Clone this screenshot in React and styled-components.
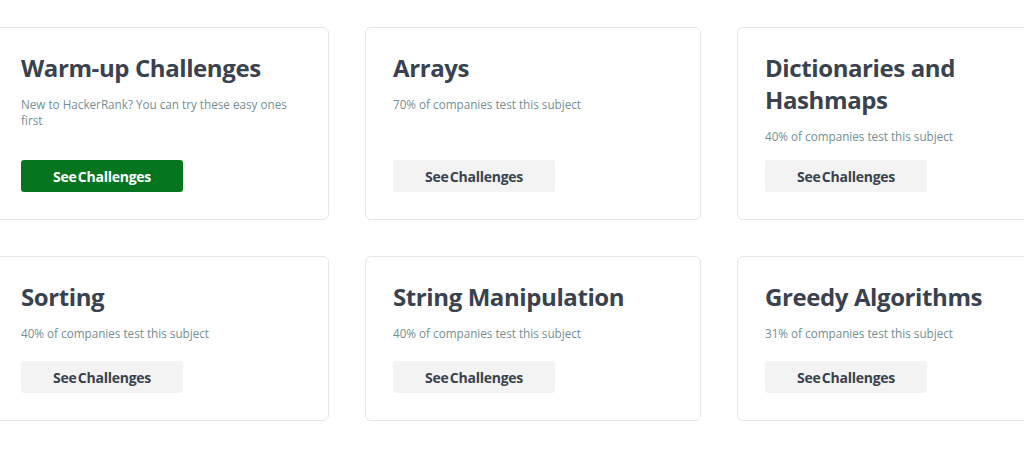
import styled, { createGlobalStyle } from 'styled-components';

const GlobalStyle = createGlobalStyle`
  body {
    margin: 0;
    background: #ffffff;
    font-family: "Open Sans", "Liberation Sans", sans-serif;
    overflow: hidden;
  }
`;

const Page = styled.main`
  width: 1024px;
  height: 456px;
  overflow: hidden;
  padding-top: 27px;
  box-sizing: border-box;
`;

const Grid = styled.div`
  display: grid;
  grid-template-columns: repeat(3, 336px);
  grid-template-rows: 193px 165px;
  column-gap: 36px;
  row-gap: 36px;
  margin-left: -7px;
`;

const Card = styled.article`
  display: flex;
  flex-direction: column;
  box-sizing: border-box;
  border: 1px solid #e6e6e6;
  border-radius: 6px;
  background: #fff;
  padding: 24px 27px 27px 27px;
`;

const Title = styled.h3`
  margin: 0 0 12px;
  font-size: 24px;
  line-height: 32px;
  font-weight: 700;
  letter-spacing: -0.4px;
  color: #39424e;
`;

const Subtitle = styled.p`
  margin: 0;
  font-size: 11.7px;
  line-height: 16px;
  color: #738f93;
`;

const Button = styled.button`
  margin-top: auto;
  flex-shrink: 0;
  width: 162px;
  height: 32px;
  padding: 0;
  border: none;
  border-radius: 3px;
  font-family: "Open Sans", "Liberation Sans", sans-serif;
  font-size: 14px;
  font-weight: 700;
  letter-spacing: -0.25px;
  word-spacing: -2px;
  cursor: pointer;
  background: ${({ $primary }) => ($primary ? '#05761f' : '#f3f3f3')};
  color: ${({ $primary }) => ($primary ? '#ffffff' : '#39424e')};
`;

const subjects = [
  { title: 'Warm-up Challenges', text: 'New to HackerRank? You can try these easy ones first', primary: true },
  { title: 'Arrays', text: '70% of companies test this subject' },
  { title: 'Dictionaries and Hashmaps', text: '40% of companies test this subject' },
  { title: 'Sorting', text: '40% of companies test this subject' },
  { title: 'String Manipulation', text: '40% of companies test this subject' },
  { title: 'Greedy Algorithms', text: '31% of companies test this subject' },
];

export default function App() {
  return (
    <>
      <GlobalStyle />
      <Page>
        <Grid>
          {subjects.map((s) => (
            <Card key={s.title}>
              <Title>{s.title}</Title>
              <Subtitle>{s.text}</Subtitle>
              <Button $primary={s.primary}>See Challenges</Button>
            </Card>
          ))}
        </Grid>
      </Page>
    </>
  );
}
